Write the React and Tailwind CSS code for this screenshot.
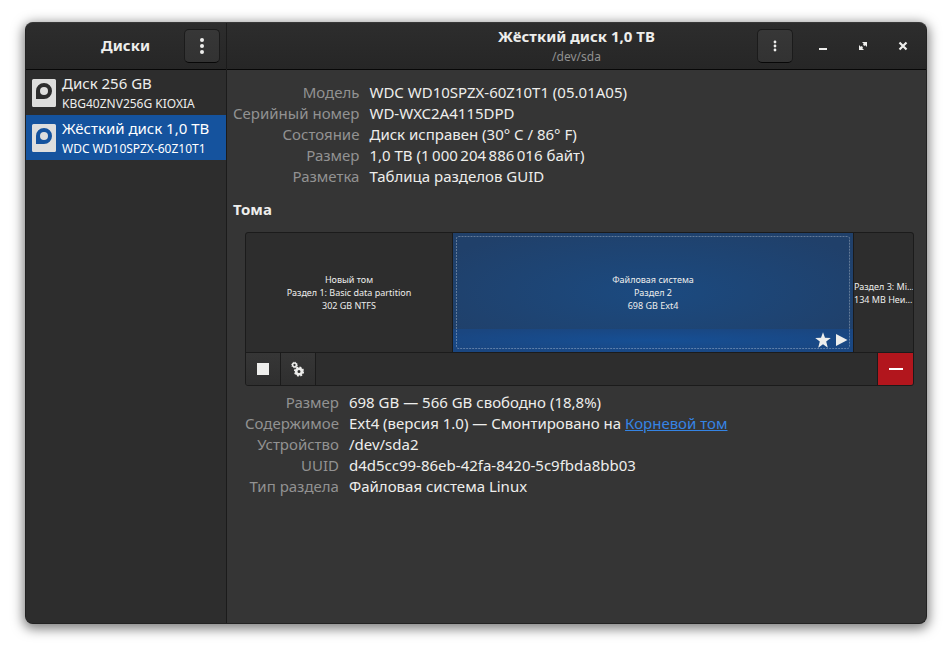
const disks = [
  { name: 'Диск 256 GB', model: 'KBG40ZNV256G KIOXIA', selected: false },
  { name: 'Жёсткий диск 1,0 TB', model: 'WDC WD10SPZX-60Z10T1', selected: true },
];

const driveInfo = [
  ['Модель', 'WDC WD10SPZX-60Z10T1 (05.01A05)'],
  ['Серийный номер', 'WD-WXC2A4115DPD'],
  ['Состояние', 'Диск исправен (30° C / 86° F)'],
  ['Размер', '1,0 TB (1\u202f000\u202f204\u202f886\u202f016 байт)'],
  ['Разметка', 'Таблица разделов GUID'],
];

const volumeInfo = [
  ['Размер', '698 GB — 566 GB свободно (18,8%)'],
  [
    'Содержимое',
    <>
      Ext4 (версия 1.0) — Смонтировано на{' '}
      <a href="#root" className="text-[#3584e4] underline">
        Корневой том
      </a>
    </>,
  ],
  ['Устройство', '/dev/sda2'],
  ['UUID', 'd4d5cc99-86eb-42fa-8420-5c9fbda8bb03'],
  ['Тип раздела', 'Файловая система Linux'],
];

function InfoTable({ rows }) {
  return (
    <dl className="grid grid-cols-[max-content_1fr] gap-x-2.5 leading-[21px]">
      {rows.map(([label, value]) => (
        <div key={label} className="contents">
          <dt className="text-right text-[#929292]">{label}</dt>
          <dd>{value}</dd>
        </div>
      ))}
    </dl>
  );
}

function DriveIcon() {
  return (
    <svg width="24" height="28" viewBox="0 0 24 28" className="shrink-0" aria-hidden="true">
      <path
        fill="#dededd"
        fillRule="evenodd"
        d="M1.500 0h21a1.500 1.500 0 0 1 1.500 1.500v25a1.500 1.500 0 0 1-1.500 1.500h-21a1.500 1.500 0 0 1-1.500-1.500v-25a1.500 1.500 0 0 1 1.500-1.500zM12 4a8 8 0 0 0-8 8v8h8a8 8 0 0 0 0-16z"
      />
      <circle cx="12" cy="12" r="4" fill="#dededd" />
    </svg>
  );
}

function MenuButton({ label, radius, spread }) {
  return (
    <button
      type="button"
      aria-label={label}
      className="flex h-[34px] w-9 items-center justify-center rounded-[5px] border border-[#1b1b1b] border-b-[#070707] bg-linear-to-t from-[#323232] to-[#373737]"
    >
      <svg width="16" height="16" viewBox="0 0 16 16" fill="#eeeeec" aria-hidden="true">
        <circle cx="8" cy={8 - spread} r={radius} />
        <circle cx="8" cy="8" r={radius} />
        <circle cx="8" cy={8 + spread} r={radius} />
      </svg>
    </button>
  );
}

function WindowButton({ label, children }) {
  return (
    <button type="button" aria-label={label} className="flex size-6 items-center justify-center">
      <svg width="16" height="16" viewBox="0 0 16 16" fill="#eeeeec" aria-hidden="true">
        {children}
      </svg>
    </button>
  );
}

function GearsIcon() {
  return (
    <svg width="16" height="16" viewBox="0 0 16 16" fill="none" stroke="#eeeeec" aria-hidden="true">
      <circle cx="4.500" cy="4" r="1.900" strokeWidth="1.500" />
      <circle cx="4.500" cy="4" r="2.800" strokeWidth="1" strokeDasharray="1.100 1.100" />
      <circle cx="9" cy="10.500" r="2.800" strokeWidth="2.600" />
      <circle cx="9" cy="10.500" r="4.300" strokeWidth="1.600" strokeDasharray="1.900 1.477" />
    </svg>
  );
}

export default function App() {
  return (
    <div className="flex min-h-screen flex-col bg-white px-[25px] pt-[22px] pb-7 font-['Noto_Sans','DejaVu_Sans',sans-serif] text-[15px] text-[#eeeeec]">
      <div className="flex flex-1 overflow-hidden rounded-lg border border-[#222222] border-t-[#383838] bg-[#353535] shadow-[0_3px_12px_2px_rgba(0,0,0,0.5)]">
        <aside className="flex w-[201px] shrink-0 flex-col border-r border-[#1b1b1b] bg-[#2d2d2d]">
          <header className="flex h-[47px] items-center justify-end gap-[34px] border-b border-[#070707] bg-linear-to-t from-[#262626] to-[#2d2d2d] pr-1.5">
            <h1 className="pb-0.5 leading-5 font-bold">Диски</h1>
            <MenuButton label="Главное меню" radius={2} spread={6} />
          </header>
          <ul>
            {disks.map((disk) => (
              <li key={disk.name}>
                <button
                  type="button"
                  aria-pressed={disk.selected}
                  className={`flex h-[45px] w-full items-center gap-1.5 px-1.5 text-left ${disk.selected ? 'bg-[#15539e] text-white' : ''}`}
                >
                  <DriveIcon />
                  <span className="min-w-0 pt-0.5 whitespace-nowrap">
                    <span className="block leading-[21px]">{disk.name}</span>
                    <span className="block text-[12px] leading-5">{disk.model}</span>
                  </span>
                </button>
              </li>
            ))}
          </ul>
        </aside>

        <main className="flex min-w-0 flex-1 flex-col">
          <header className="grid h-[47px] grid-cols-[1fr_auto_1fr] items-center border-b border-[#070707] bg-linear-to-t from-[#262626] to-[#2d2d2d]">
            <div className="col-start-2 pt-0.5 text-center">
              <h2 className="leading-5 font-bold">Жёсткий диск 1,0 TB</h2>
              <p className="text-[12px] leading-[22px] text-[#919190]">/dev/sda</p>
            </div>
            <div className="flex items-center justify-end pr-[11px]">
              <MenuButton label="Меню диска" radius={1.4} spread={4} />
              <div className="ml-[18px] flex gap-4">
                <WindowButton label="Свернуть">
                  <path d="M4 10h8v2H4z" />
                </WindowButton>
                <WindowButton label="Развернуть">
                  <path d="M7 4h5v5l-1.700-1.700-1 .700-1.300-1.300.700-1zM4 7l1.700 1.700 1-.700 1.300 1.300-.700 1L9 12H4z" />
                </WindowButton>
                <WindowButton label="Закрыть">
                  <path d="M4.500 4.500l7 7M11.500 4.500l-7 7" stroke="#eeeeec" strokeWidth="2.200" />
                </WindowButton>
              </div>
            </div>
          </header>

          <div className="px-1.5 pt-3">
            <InfoTable rows={driveInfo} />
            <h3 className="mt-3 leading-[21px] font-bold">Тома</h3>

            <section className="mt-3 mr-1.5 ml-3">
              <div className="overflow-hidden rounded-[3px] border border-[#1b1b1b] bg-[#2d2d2d]">
                <div className="grid h-[119px] grid-cols-[206fr_402fr_59fr] text-[9px] leading-[13px]">
                  <button type="button" className="min-w-0 text-center">
                    <span className="block">Новый том</span>
                    <span className="block">Раздел 1: Basic data partition</span>
                    <span className="block">302 GB NTFS</span>
                  </button>
                  <button
                    type="button"
                    aria-pressed="true"
                    className="relative min-w-0 border-x border-[#1b1b1b] bg-[radial-gradient(ellipse_at_center,#1b4a80_0%,#20406a_85%)] text-center"
                  >
                    <span className="absolute inset-x-0 bottom-0 h-[23px] bg-[radial-gradient(ellipse_at_center,#164f94_0%,#1a4680_85%)]" />
                    <svg
                      className="absolute top-[3px] left-[3px] h-[calc(100%-7px)] w-[calc(100%-7px)] overflow-visible"
                      aria-hidden="true"
                    >
                      <rect
                        x="0.5"
                        y="0.5"
                        width="100%"
                        height="100%"
                        rx="2"
                        fill="none"
                        stroke="#ffffff"
                        strokeOpacity="0.3"
                        strokeDasharray="2 1"
                      />
                    </svg>
                    <span className="block">Файловая система</span>
                    <span className="block">Раздел 2</span>
                    <span className="block">698 GB Ext4</span>
                    <svg
                      width="34"
                      height="16"
                      viewBox="0 0 34 16"
                      fill="#eeeeec"
                      className="absolute right-1 bottom-1"
                      aria-hidden="true"
                    >
                      <path d="M8 .300l2 5.400 5.800.200-4.600 3.500 1.600 6.300L8 12.300l-4.800 3.400 1.600-6.300L.200 5.900l5.800-.200z" />
                      <path d="M21 2l11.500 6L21 14z" />
                    </svg>
                  </button>
                  <button type="button" className="min-w-0 text-left whitespace-nowrap">
                    <span className="block">Раздел 3: Mi…</span>
                    <span className="block">134 MB Неи…</span>
                  </button>
                </div>
                <div className="flex h-[33px] border-t border-[#1b1b1b]">
                  <button
                    type="button"
                    aria-label="Отключить раздел"
                    className="flex w-[35px] items-center justify-center border-r border-[#1b1b1b] bg-linear-to-t from-[#2f2f2f] to-[#363636]"
                  >
                    <span className="size-3 bg-[#eeeeec]" />
                  </button>
                  <button
                    type="button"
                    aria-label="Дополнительные параметры раздела"
                    className="flex w-[35px] items-center justify-center border-r border-[#1b1b1b] bg-linear-to-t from-[#2f2f2f] to-[#363636]"
                  >
                    <GearsIcon />
                  </button>
                  <button
                    type="button"
                    aria-label="Удалить раздел"
                    className="ml-auto flex w-9 items-center justify-center border-l border-[#1b1b1b] bg-[#b2161d]"
                  >
                    <span className="h-0.5 w-3.5 bg-white" />
                  </button>
                </div>
              </div>
              <div className="mt-1.5">
                <InfoTable rows={volumeInfo} />
              </div>
            </section>
          </div>
        </main>
      </div>
    </div>
  );
}
